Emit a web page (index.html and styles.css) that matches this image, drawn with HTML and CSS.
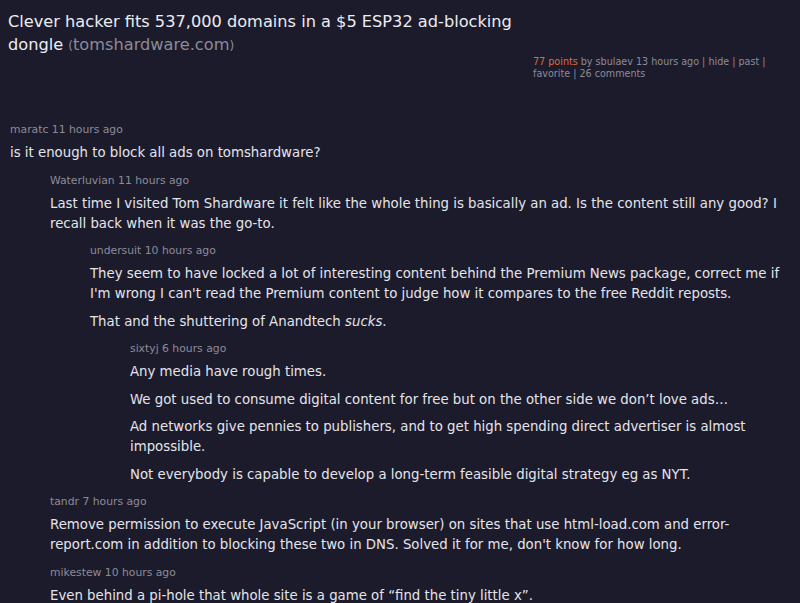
FILE: index.html
```html
<!DOCTYPE html>
<html>
<head>
    <meta charset="utf-8">
    <link rel="stylesheet" href="styles.css">
</head>
<body>
    <div class="story">
        <div class="story-title">
            Clever hacker fits 537,000 domains in a $5 ESP32 ad-blocking dongle
            <span class="paren">(</span><span class="site-name">tomshardware.com</span><span class="paren">)</span>
        </div>
        <div class="story-meta">
            <span class="points">77 points</span> by sbulaev 13 hours ago | hide | past | favorite | 26 comments
        </div>
    </div>

    <div class="comments">
        <div class="comment depth-0">
            <div class="comment-head">maratc 11 hours ago</div>
            <div class="comment-body">
                <p>is it enough to block all ads on tomshardware?</p>
            </div>
        </div>

        <div class="comment depth-1">
            <div class="comment-head">Waterluvian 11 hours ago</div>
            <div class="comment-body">
                <p>Last time I visited Tom Shardware it felt like the whole thing is basically an ad. Is the content still any good? I recall back when it was the go-to.</p>
            </div>
        </div>

        <div class="comment depth-2">
            <div class="comment-head">undersuit 10 hours ago</div>
            <div class="comment-body">
                <p>They seem to have locked a lot of interesting content behind the Premium News package, correct me if I'm wrong I can't read the Premium content to judge how it compares to the free Reddit reposts.</p>
                <p>That and the shuttering of Anandtech <i>sucks</i>.</p>
            </div>
        </div>

        <div class="comment depth-3">
            <div class="comment-head">sixtyj 6 hours ago</div>
            <div class="comment-body">
                <p>Any media have rough times.</p>
                <p>We got used to consume digital content for free but on the other side we don’t love ads…</p>
                <p>Ad networks give pennies to publishers, and to get high spending direct advertiser is almost impossible.</p>
                <p>Not everybody is capable to develop a long-term feasible digital strategy eg as NYT.</p>
            </div>
        </div>

        <div class="comment depth-1">
            <div class="comment-head">tandr 7 hours ago</div>
            <div class="comment-body">
                <p>Remove permission to execute JavaScript (in your browser) on sites that use html-load.com and error-report.com in addition to blocking these two in DNS. Solved it for me, don't know for how long.</p>
            </div>
        </div>

        <div class="comment depth-1">
            <div class="comment-head">mikestew 10 hours ago</div>
            <div class="comment-body">
                <p>Even behind a pi-hole that whole site is a game of “find the tiny little x”.</p>
            </div>
        </div>
    </div>
</body>
</html>
```

FILE: styles.css
```css
body {
    margin: 0;
    padding: 10px 12px 0 8px;
    background: #1c1b2c;
    color: #e4e4ea;
    font-family: "DejaVu Sans", Verdana, sans-serif;
}

.story {
    display: flex;
    gap: 13px;
}

.story-title {
    width: 512px;
    font-size: 16.2px;
    line-height: 23px;
    color: #ececf1;
}

.paren {
    font-size: 12px;
    color: #8b8b96;
}

.site-name {
    color: #8b8b96;
}

.story-meta {
    flex: 1;
    margin-top: 46px;
    font-size: 9.6px;
    line-height: 12px;
    color: #8c8c97;
}

.points {
    color: #d86c3c;
}

.comments {
    margin-top: 43px;
}

.comment {
    margin-bottom: 10.5px;
}

.depth-0 { padding-left: 2px; }
.depth-1 { padding-left: 42px; }
.depth-2 { padding-left: 82px; }
.depth-3 { padding-left: 122px; }

.comment-head {
    font-size: 10.8px;
    line-height: 14px;
    color: #8c8c97;
    margin-bottom: 6px;
}

.comment-body p {
    margin: 0 0 7.5px 0;
    font-size: 13.3px;
    line-height: 20px;
}
```
